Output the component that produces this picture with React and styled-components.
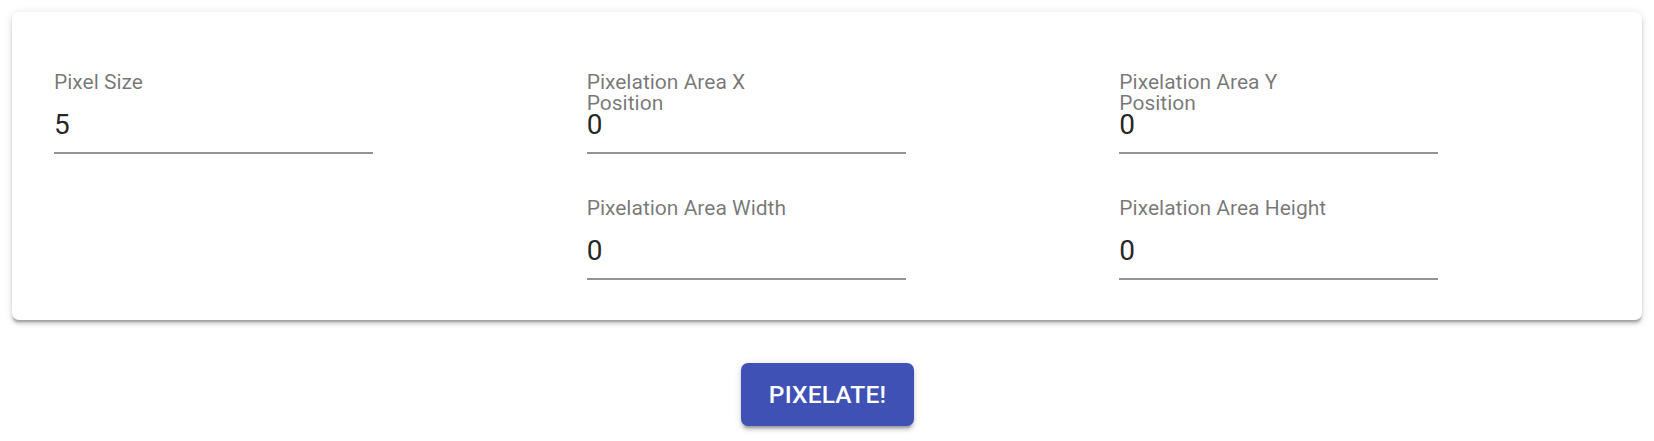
import React from 'react';
import styled, { createGlobalStyle } from 'styled-components';

const GlobalStyle = createGlobalStyle`
  body {
    margin: 0;
    background: #fff;
    font-family: Roboto, "Liberation Sans", Arial, sans-serif;
  }
`;

const Page = styled.div`
  padding: 12px;
`;

const Card = styled.div`
  background: #fff;
  border-radius: 7px;
  padding: 60px 16px 40px;
  box-shadow: 0 3.5px 1.75px -1.75px rgba(0, 0, 0, 0.2),
    0 3.5px 3.5px 0 rgba(0, 0, 0, 0.14),
    0 1.75px 8.75px 0 rgba(0, 0, 0, 0.12);
`;

const Grid = styled.div`
  display: grid;
  grid-template-columns: repeat(3, 1fr);
  row-gap: 44px;
`;

const Cell = styled.div`
  padding: 0 26px;
  grid-column: ${props => props.$col || 'auto'};
`;

const Field = styled.label`
  display: flex;
  flex-direction: column;
  width: 319px;
`;

const Label = styled.span`
  display: block;
  height: 21px;
  max-width: 215px;
  font-size: 21px;
  line-height: 21px;
  color: rgba(0, 0, 0, 0.54);
  overflow: visible;
`;

const Input = styled.input`
  display: block;
  box-sizing: content-box;
  width: 100%;
  height: 33px;
  margin: 15px 0 0;
  padding: 0 0 11px;
  border: none;
  border-bottom: 2px solid rgba(0, 0, 0, 0.42);
  background: transparent;
  outline: none;
  font-family: Roboto, "Liberation Sans", Arial, sans-serif;
  font-size: 28px;
  line-height: 33px;
  color: rgba(0, 0, 0, 0.87);
`;

const Footer = styled.div`
  display: flex;
  justify-content: center;
  padding-top: 43px;
  padding-left: 1px;
`;

const Button = styled.button`
  background: #3f51b5;
  color: #fff;
  border: none;
  border-radius: 7px;
  padding: 10.5px 28px;
  font-family: Roboto, "Liberation Sans", Arial, sans-serif;
  font-weight: 500;
  font-size: 24.5px;
  line-height: 1.72;
  letter-spacing: 0.2px;
  text-transform: uppercase;
  cursor: pointer;
  box-shadow: 0 5.25px 1.75px -3.5px rgba(0, 0, 0, 0.2),
    0 3.5px 3.5px 0 rgba(0, 0, 0, 0.14),
    0 1.75px 8.75px 0 rgba(0, 0, 0, 0.12);
  &:hover {
    background: #303f9f;
  }
`;

const fields = [
  { label: 'Pixel Size', value: '5' },
  { label: 'Pixelation Area X Position', value: '0' },
  { label: 'Pixelation Area Y Position', value: '0' },
  { label: 'Pixelation Area Width', value: '0', col: 2 },
  { label: 'Pixelation Area Height', value: '0' },
];

const TextField = ({ label, value }) => (
  <Field>
    <Label>{label}</Label>
    <Input type="number" defaultValue={value} />
  </Field>
);

const App = () => (
  <Page>
    <GlobalStyle />
    <Card>
      <Grid>
        {fields.map(f => (
          <Cell key={f.label} $col={f.col}>
            <TextField label={f.label} value={f.value} />
          </Cell>
        ))}
      </Grid>
    </Card>
    <Footer>
      <Button>Pixelate!</Button>
    </Footer>
  </Page>
);

export default App;
